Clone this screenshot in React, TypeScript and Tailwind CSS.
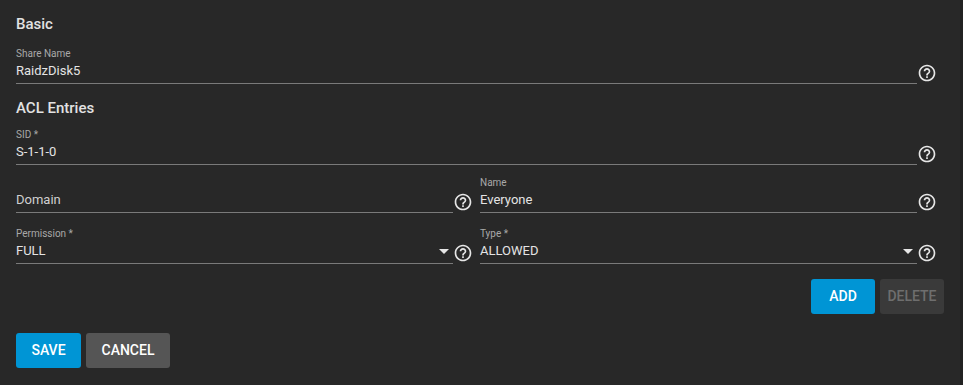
import React from 'react';

const HelpIcon: React.FC = () => (
  <svg viewBox="0 0 24 24" className="w-[20px] h-[20px] shrink-0" fill="#e6e6e6">
    <path d="M11 18h2v-2h-2v2zm1-16C6.48 2 2 6.48 2 12s4.48 10 10 10 10-4.48 10-10S17.52 2 12 2zm0 18c-4.41 0-8-3.59-8-8s3.59-8 8-8 8 3.59 8 8-3.59 8-8 8zm0-14c-2.21 0-4 1.79-4 4h2c0-1.1.9-2 2-2s2 .9 2 2c0 2-3 1.75-3 5h2c0-2.25 3-2.5 3-5 0-2.21-1.79-4-4-4z" />
  </svg>
);

interface FieldProps {
  label?: string;
  value: string;
  placeholder?: boolean;
  select?: boolean;
}

const Field: React.FC<FieldProps> = ({ label, value, placeholder, select }) => (
  <div className="flex items-end flex-1 min-w-0">
    <div className="flex-1 min-w-0 border-b border-[#7a7a7a] pb-[2px]">
      <div className="h-[12px] leading-[12px] text-[10px] text-[#a8a8a8]">{label ?? ''}</div>
      <div className="flex items-center h-[20px] mt-[1px]">
        <span className={`flex-1 text-[13px] leading-[20px] ${placeholder ? 'text-[#d0d0d0]' : 'text-[#e4e4e4]'}`}>
          {value}
        </span>
        {select && (
          <svg viewBox="0 0 10 5" className="w-[10px] h-[5px] mr-[4px]" fill="#e6e6e6">
            <path d="M0 0h10L5 5z" />
          </svg>
        )}
      </div>
    </div>
    <div className="ml-[1px] mb-[1px] w-[19px] flex justify-end">
      <HelpIcon />
    </div>
  </div>
);

const App: React.FC = () => {
  return (
    <div className="w-[963px] h-[385px] bg-[#282828] flex" style={{ fontFamily: 'Roboto, "Liberation Sans", sans-serif' }}>
      <div className="flex-1 pl-4 pr-[23px] pt-[14px]">
        {/* Basic */}
        <h2 className="text-[15px] leading-[20px] font-medium text-[#e2e2e2]">Basic</h2>
        <div className="mt-[14px] flex">
          <Field label="Share Name" value="RaidzDisk5" />
        </div>

        {/* ACL Entries */}
        <h2 className="mt-[14px] text-[15px] leading-[20px] font-medium text-[#e2e2e2]">ACL Entries</h2>
        <div className="mt-[11px] flex">
          <Field label="SID *" value="S-1-1-0" />
        </div>
        <div className="mt-[12px] flex gap-[7px]">
          <Field value="Domain" placeholder />
          <Field label="Name" value="Everyone" />
        </div>
        <div className="mt-[15px] flex gap-[7px]">
          <Field label="Permission *" value="FULL" select />
          <Field label="Type *" value="ALLOWED" select />
        </div>

        <div className="mt-[15px] flex justify-end gap-[5px] mr-[-7px]">
          <button className="w-[64px] h-[35px] rounded-[3px] bg-[#0095d5] text-white text-[14px] font-medium">ADD</button>
          <button className="w-[64px] h-[35px] rounded-[3px] bg-[#3a3a3a] text-[#6e6e6e] text-[14px] font-medium">DELETE</button>
        </div>

        <div className="mt-[19px] flex gap-[5px]">
          <button className="w-[65px] h-[35px] rounded-[3px] bg-[#0095d5] text-white text-[14px] font-medium">SAVE</button>
          <button className="w-[84px] h-[35px] rounded-[3px] bg-[#555555] text-white text-[14px] font-medium">CANCEL</button>
        </div>
      </div>
      <div className="w-[3px] bg-[#222222]" />
    </div>
  );
};

export default App;
